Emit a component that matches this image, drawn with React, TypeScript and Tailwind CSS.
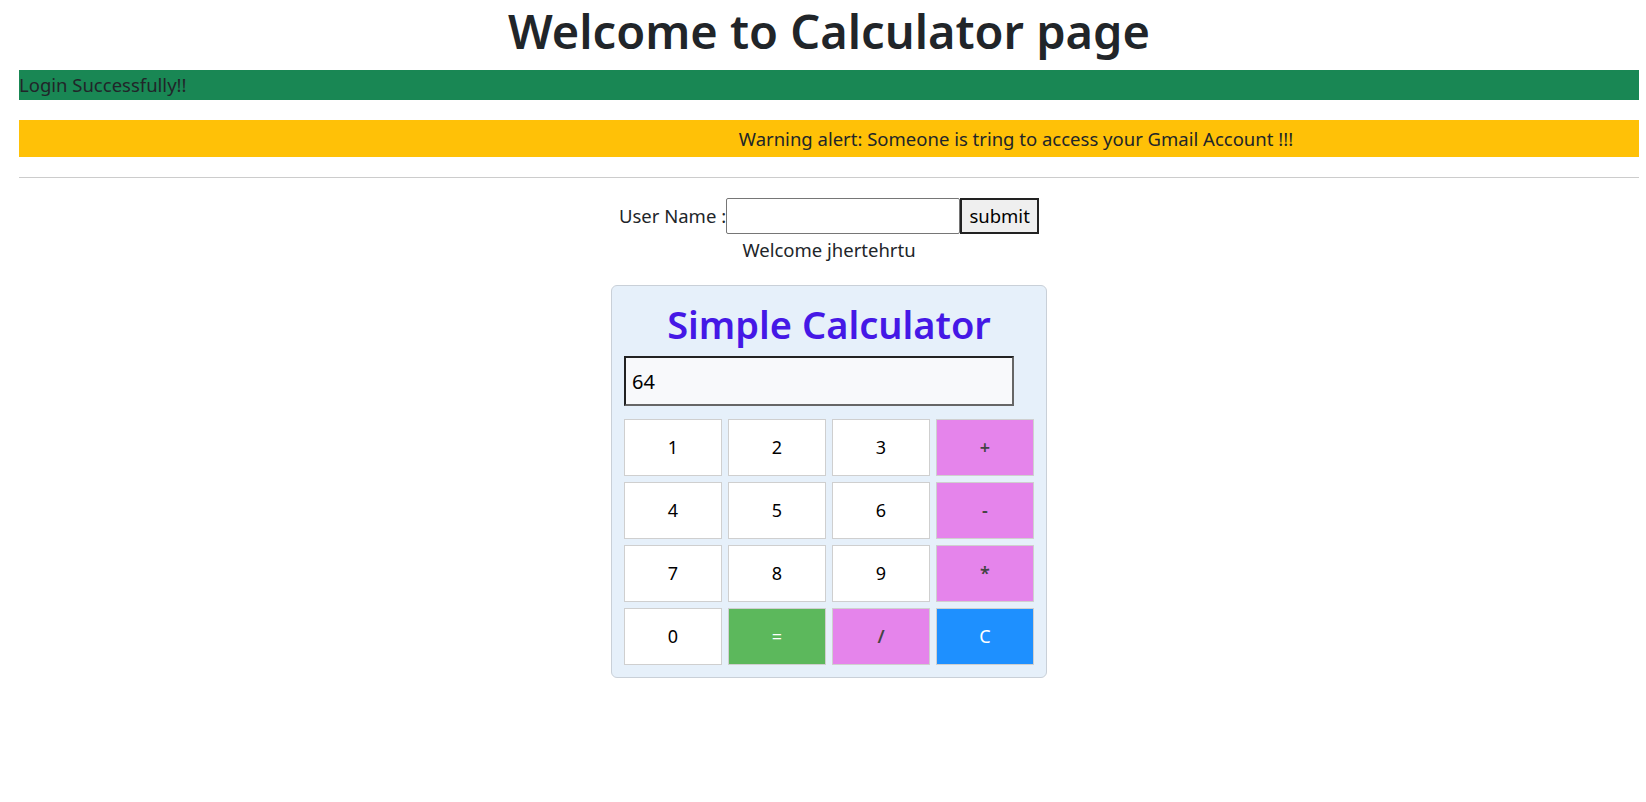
import { useState } from 'react'

const keys: { label: string; kind: 'num' | 'op' | 'eq' | 'clear' }[] = [
  { label: '1', kind: 'num' },
  { label: '2', kind: 'num' },
  { label: '3', kind: 'num' },
  { label: '+', kind: 'op' },
  { label: '4', kind: 'num' },
  { label: '5', kind: 'num' },
  { label: '6', kind: 'num' },
  { label: '-', kind: 'op' },
  { label: '7', kind: 'num' },
  { label: '8', kind: 'num' },
  { label: '9', kind: 'num' },
  { label: '*', kind: 'op' },
  { label: '0', kind: 'num' },
  { label: '=', kind: 'eq' },
  { label: '/', kind: 'op' },
  { label: 'C', kind: 'clear' },
]

const keyStyle = {
  num: 'bg-white text-black',
  op: 'bg-[#e584eb] text-[#444] font-semibold',
  eq: 'bg-[#5cb85c] text-white',
  clear: 'bg-[#1e90ff] text-white',
}

function Calculator() {
  const [value, setValue] = useState('64')

  const press = (label: string) => {
    if (label === 'C') return setValue('')
    if (label === '=') {
      try {
        // eslint-disable-next-line no-new-func
        setValue(String(Function(`return (${value})`)()))
      } catch {
        setValue('Error')
      }
      return
    }
    setValue((v) => v + label)
  }

  return (
    <div className="mx-auto mt-[21px] w-[436px] rounded-md border border-[#c9d0d8] bg-[#e6f0fa] p-3">
      <h2 className="pt-[4px] text-center text-[38px] leading-[44px] font-semibold text-[#4518e6]">
        Simple Calculator
      </h2>
      <input
        value={value}
        readOnly
        className="mt-[10px] block h-[50px] w-[390px] border-2 border-t-[#222] border-l-[#222] border-r-[#666] border-b-[#666] bg-[#f8f9fb] px-[6px] text-[20px] text-black outline-none"
      />
      <div className="mt-[13px] grid grid-cols-[repeat(4,98px)] gap-[6px]">
        {keys.map((k) => (
          <button
            key={k.label}
            onClick={() => press(k.label)}
            className={`h-[57px] border border-[#cfcfcf] text-[18px] ${keyStyle[k.kind]}`}
          >
            {k.label}
          </button>
        ))}
      </div>
    </div>
  )
}

export default function App() {
  const [name, setName] = useState('')

  return (
    <div className="min-h-screen bg-white pl-[19px] pr-[7px] font-['Noto_Sans',sans-serif] text-[18.5px] text-[#212529]">
      <h1 className="text-center text-[47px] leading-[62px] font-semibold">
        Welcome to Calculator page
      </h1>

      {/* Alerts */}
      <div className="mt-[8px] h-[30px] bg-[#198754] leading-[30px]">Login Successfully!!</div>
      <div className="mt-[20px] h-[37px] bg-[#ffc107] pl-[374px] text-center leading-[37px]">
        Warning alert: Someone is tring to access your Gmail Account !!!
      </div>
      <hr className="mt-[20px] border-t border-[#cccccc]" />

      {/* Login form */}
      <div className="mt-[20px] flex items-center justify-center">
        <label>User Name :</label>
        <input
          value={name}
          onChange={(e) => setName(e.target.value)}
          className="h-[36px] w-[234px] rounded-[2px] border border-[#767676] bg-white px-1 outline-none"
        />
        <button className="h-[36px] w-[79px] border-2 border-[#222] bg-[#efefef] text-black">
          submit
        </button>
      </div>
      <p className="mt-[2px] text-center leading-[28px]">Welcome jhertehrtu</p>

      <Calculator />
    </div>
  )
}
